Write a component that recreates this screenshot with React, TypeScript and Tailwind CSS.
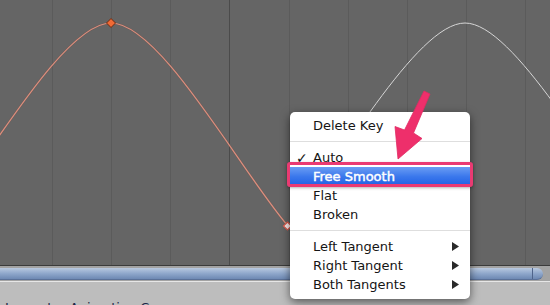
import React from "react";

const gridX = [52, 111, 170, 229, 289, 348, 407, 466, 525];

type Item = { label: string; checked?: boolean; active?: boolean; submenu?: boolean };

function SubArrow({ light }: { light?: boolean }) {
  return (
    <svg width="7" height="9" viewBox="0 0 7 9" className="block">
      <path d="M0 0 L7 4.5 L0 9 Z" fill={light ? "#fff" : "#2a2a2a"} />
    </svg>
  );
}

function MenuRow({ label, checked, active, submenu }: Item) {
  return (
    <div
      className={`h-[19px] flex items-center pr-[11px] ${
        active
          ? "bg-linear-to-b from-[#6a9cf3] via-[#3b78ec] to-[#1f5fe4] text-white [-webkit-text-stroke:0.45px_white]"
          : "text-[#151515]"
      }`}
    >
      <span className="w-[23px] pl-[6px] text-[14px] leading-none">{checked ? "✓" : ""}</span>
      <span className="flex-1 whitespace-nowrap">{label}</span>
      {submenu && <SubArrow light={active} />}
    </div>
  );
}

function Separator() {
  return (
    <div className="h-[13px] flex items-center">
      <div className="h-px w-full bg-[#dedede]" />
    </div>
  );
}

function CurveCanvas() {
  return (
    <svg width="550" height="265" className="block bg-[#656565]">
      {gridX.map((x) => (
        <line
          key={x}
          x1={x + 0.5}
          y1="0"
          x2={x + 0.5}
          y2="265"
          stroke={x === 229 ? "#4b4b4b" : "#5b5b5b"}
          strokeWidth="1"
        />
      ))}
      {/* red segment up to the selected key */}
      <path
        d="M-66 226 C-18 170 62 23 111 23 C160 23 240 170 288 226"
        fill="none"
        stroke="#7a4a40"
        strokeWidth="2.2"
        opacity="0.3"
      />
      <path
        d="M-66 226 C-18 170 62 23 111 23 C160 23 240 170 288 226"
        fill="none"
        stroke="#dc8f7e"
        strokeWidth="1.2"
      />
      {/* next segment */}
      <path
        d="M288 226 C336 170 416 23 465 23 C514 23 594 170 642 226"
        fill="none"
        stroke="#d6d6d6"
        strokeWidth="1"
      />
      <path d="M111 18.5 L115.5 23 L111 27.5 L106.5 23 Z" fill="#f06a35" stroke="#6e2a12" strokeWidth="1" />
      <path d="M287.5 222 L291.5 226 L287.5 230 L283.5 226 Z" fill="#fdeeee" stroke="#d9574a" strokeWidth="1.2" />
    </svg>
  );
}

export default function App() {
  const top: Item[] = [{ label: "Delete Key" }];
  const modes: Item[] = [
    { label: "Auto", checked: true },
    { label: "Free Smooth", active: true },
    { label: "Flat" },
    { label: "Broken" },
  ];
  const tangents: Item[] = [
    { label: "Left Tangent", submenu: true },
    { label: "Right Tangent", submenu: true },
    { label: "Both Tangents", submenu: true },
  ];

  return (
    <div className="relative w-[550px] h-[305px] overflow-hidden bg-[#bdbdbd] font-['DejaVu_Sans','Liberation_Sans',sans-serif]">
      <CurveCanvas />
      <div className="h-px bg-[#3b3b3b]" />
      <div className="h-[15px] bg-[#a3a3a3] pt-[2px]">
        <div className="h-[12px] w-[543px] rounded-r-[6px] bg-linear-to-b from-[#b9c9e0] via-[#8fa7cb] to-[#6e89b3] border-b border-[#5b7198] flex justify-end">
          <div className="w-px h-full bg-[#4f648b] mr-[10px]" />
        </div>
      </div>
      <div className="h-px bg-[#e6e6e6]" />
      <div className="h-[23px] overflow-hidden pl-[5px] pt-[19px] text-[13px] leading-[13px] text-[#1c2848]">
        Inspector Animation Curves
      </div>

      {/* context menu */}
      <div className="absolute left-[290px] top-[112px] w-[180px] rounded-[5px] bg-white pt-[4px] pb-[5px] text-[13px] shadow-[0_3px_10px_rgba(0,0,0,0.55)]">
        {top.map((it) => (
          <MenuRow key={it.label} {...it} />
        ))}
        <Separator />
        {modes.map((it) => (
          <MenuRow key={it.label} {...it} />
        ))}
        <Separator />
        {tangents.map((it) => (
          <MenuRow key={it.label} {...it} />
        ))}
      </div>

      {/* callout box */}
      <div className="absolute left-[287px] top-[162px] w-[186px] h-[25px] rounded-[3px] border-[3px] border-[#ea3a72] shadow-[0_1px_3px_rgba(0,0,0,0.3)]" />

      {/* callout arrow */}
      <svg width="550" height="305" className="absolute left-0 top-0 pointer-events-none">
        <path
          d="M424 91 L430 94 L413.5 133 L422 138.5 L398 159 L395 126.5 L404.5 130 Z"
          fill="#ee2f6b"
          stroke="#e02a62"
          strokeWidth="0.8"
          strokeLinejoin="round"
        />
      </svg>
    </div>
  );
}
